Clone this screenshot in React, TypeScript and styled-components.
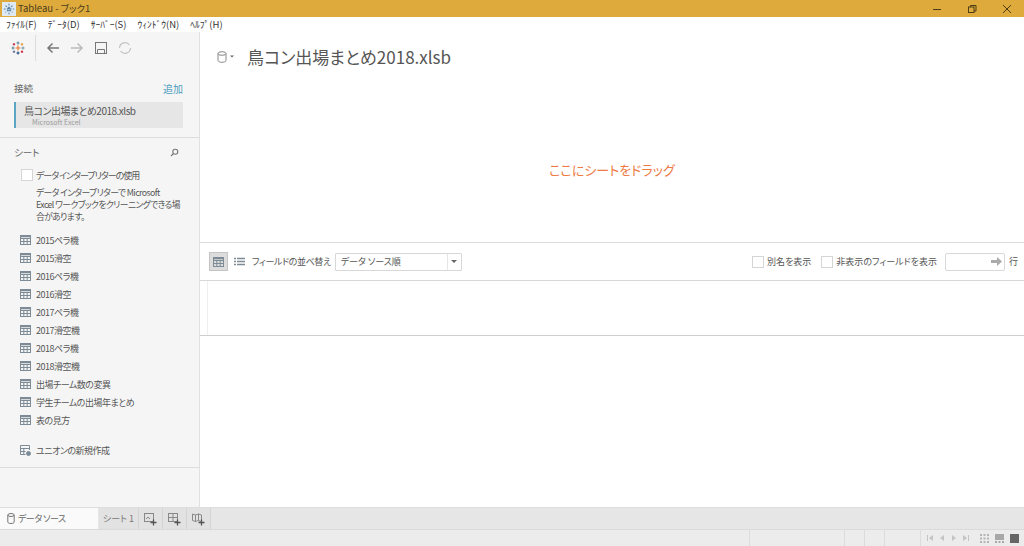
import React from "react";
import styled, { createGlobalStyle } from "styled-components";

const Global = createGlobalStyle`
  html, body { margin: 0; padding: 0; background: #fff; }
  body { font-family: "Noto Sans CJK JP", "Noto Sans", sans-serif; color: #555; overflow: hidden; font-feature-settings: "palt"; }
  * { box-sizing: border-box; }
`;
const Page = styled.div`width:1024px;height:546px;display:flex;flex-direction:column;overflow:hidden;`;
const TitleBar = styled.div`height:17px;background:#deaa3b;display:flex;align-items:center;flex:none;`;
const AppIcon = styled.div`width:14px;height:14px;margin-left:2px;background:#dfe9f1;display:flex;align-items:center;justify-content:center;`;
const TitleText = styled.span`font-size:9.5px;color:#4a3c1c;margin-left:2px;line-height:17px;`;
const WinButtons = styled.div`margin-left:auto;display:flex;align-items:center;`;
const WinBtn = styled.div`width:35px;height:17px;display:flex;align-items:center;justify-content:center;`;
const MenuBar = styled.div`height:15px;background:#fff;display:flex;align-items:center;padding-left:6px;gap:11px;flex:none;`;
const MenuItem = styled.span`font-size:9.5px;color:#333;line-height:15px;`;
const Body = styled.div`flex:1;display:flex;min-height:0;`;
const Sidebar = styled.aside`width:200px;flex:none;background:#f5f5f5;border-right:1px solid #e0e0e0;display:flex;flex-direction:column;`;
const SideTools = styled.div`height:32px;display:flex;align-items:center;padding-left:11px;flex:none;`;
const ToolSep = styled.div`width:1px;height:26px;background:#dcdcdc;margin:0 10px;`;
const ToolIcons = styled.div`display:flex;align-items:center;gap:10px;`;
const ConnSection = styled.section`padding:16px 16px 10px 14px;border-bottom:1px solid #dcdcdc;height:74px;flex:none;`;
const SectionHead = styled.div`display:flex;justify-content:space-between;align-items:center;height:16px;font-size:9.5px;color:#666;`;
const AddLink = styled.span`color:#4d9dc0;font-size:10px;`;
const ConnCard = styled.div`margin-top:6px;height:26px;background:#e6e6e6;border-left:2px solid #5ba5c4;padding-left:8px;display:flex;flex-direction:column;justify-content:center;`;
const ConnName = styled.div`font-size:10px;line-height:13px;color:#555;letter-spacing:-.5px;`;
const ConnType = styled.div`font-size:7px;line-height:10px;color:#999;padding-left:8px;`;
const SheetSection = styled.section`padding:6px 20px 0 14px;height:330px;border-bottom:1px solid #dcdcdc;flex:none;`;
const CheckRow = styled.label`display:flex;align-items:center;gap:3px;font-size:9px;letter-spacing:-1px;color:#555;margin-top:8px;margin-left:7px;height:14px;white-space:nowrap;`;
const Box = styled.span`width:12px;height:12px;background:#fff;border:1px solid #d5d5d5;display:inline-block;flex:none;`;
const Desc = styled.p`margin:5px 0 0 22px;font-size:8.800px;letter-spacing:-.6px;line-height:12px;color:#555;white-space:nowrap;`;
const SheetList = styled.div`margin-top:8px;display:flex;flex-direction:column;`;
const SheetRow = styled.div<{ $gap?: boolean }>`height:18px;display:flex;align-items:center;gap:5px;padding-left:6px;font-size:9px;letter-spacing:-.5px;color:#555;white-space:nowrap;margin-top:${(p) => (p.$gap ? "12px" : "0")};`;
const Main = styled.main`flex:1;display:flex;flex-direction:column;min-width:0;background:#fff;`;
const Header = styled.div`height:211px;display:flex;flex-direction:column;border-bottom:1px solid #dcdcdc;flex:none;`;
const TitleRow = styled.div`display:flex;align-items:center;height:49px;padding-left:17px;gap:12px;flex:none;`;
const BookTitle = styled.h1`margin:0;font-size:17px;font-weight:400;color:#555;`;
const DropZone = styled.div`flex:1;display:flex;align-items:center;justify-content:center;color:#ee7a45;font-size:13px;padding-top:16px;`;
const GridBar = styled.div`height:38px;border-bottom:1px solid #d8d8d8;display:flex;align-items:center;padding:0 6px 0 9px;flex:none;`;
const ViewBtn = styled.div<{ $on?: boolean }>`width:19px;height:19px;display:flex;align-items:center;justify-content:center;background:${(p) => (p.$on ? "#dcdcdc" : "transparent")};border:1px solid ${(p) => (p.$on ? "#c4c4c4" : "transparent")};margin-right:2px;`;
const BarLabel = styled.span<{ $lead?: boolean }>`font-size:9px;color:#555;white-space:nowrap;margin-left:${(p) => (p.$lead ? "1px" : "0")};letter-spacing:${(p) => (p.$lead ? "-.4px" : "0")};`;
const Select = styled.div`width:127px;height:18px;margin-left:4px;border:1px solid #d8d8d8;display:flex;align-items:center;font-size:9px;padding-left:5px;border-radius:1px;`;
const Caret = styled.div`margin-left:auto;width:14px;height:16px;border-left:1px solid #e6e6e6;display:flex;align-items:center;justify-content:center;&::after{content:"";border:3px solid transparent;border-top:3px solid #666;margin-top:3px;}`;
const Right = styled.div`margin-left:auto;display:flex;align-items:center;`;
const OptLabel = styled.label<{ $mr: number }>`display:flex;align-items:center;gap:3px;font-size:9px;color:#555;margin-right:${(p) => p.$mr}px;`;
const RowsInput = styled.div`width:60px;height:18px;border:1px solid #d8d8d8;border-radius:2px;display:flex;align-items:center;justify-content:flex-end;padding-right:2px;margin-right:4px;`;
const GridArea = styled.div`height:55px;border-bottom:1px solid #cfcfcf;flex:none;padding-left:7px;`;
const GridCol = styled.div`height:100%;border-left:1px solid #efefef;`;
const TabBar = styled.div`height:23px;background:#e6e6e6;border-top:1px solid #dedede;border-bottom:1px solid #dadada;display:flex;flex:none;`;
const DataTab = styled.div`width:98px;background:#fafafa;display:flex;align-items:center;gap:3px;padding-left:7px;font-size:9px;letter-spacing:-.5px;color:#666;`;
const SheetTab = styled.div`width:40px;margin-left:1px;display:flex;align-items:center;justify-content:center;font-size:9px;color:#777;background:#e2e2e2;border-right:1px solid #d4d4d4;`;
const IconTab = styled.div`width:24px;display:flex;align-items:center;justify-content:center;background:#e2e2e2;border-right:1px solid #d4d4d4;`;
const StatusBar = styled.div`height:16px;background:#ececec;display:flex;align-items:center;flex:none;padding-left:749px;padding-right:5px;`;
const StatusCell = styled.div<{ $w: number }>`width:${(p) => p.$w}px;height:16px;border-left:1px solid #dcdcdc;flex:none;`;
const Pager = styled.div`height:16px;border-left:1px solid #dcdcdc;padding-left:5px;display:flex;align-items:center;gap:4px;flex:none;`;
const PageGlyph = styled.svg`width:8px;height:8px;`;
const ViewGlyphs = styled.div`display:flex;align-items:center;gap:6px;margin-left:10px;`;

const Grid = () => (
  <svg width="11" height="10" viewBox="0 0 11 10" fill="none" stroke="#7d8b96">
    <rect x=".5" y=".5" width="10" height="9" />
    <path d="M.5 3.500h10M.5 6.500h10M3.800 3v6.500M7.200 3v6.500" />
    <path d="M.5 1.500h10" strokeWidth="1.500" />
  </svg>
);
const Arrow = ({ dir, c }: { dir: "l" | "r"; c: string }) => (
  <svg width="14" height="12" viewBox="0 0 14 12" fill="none" stroke={c} strokeWidth="1.500" style={dir === "r" ? { transform: "scaleX(-1)" } : undefined}>
    <path d="M13 6H2M6.500 1.500 2 6l4.500 4.500" />
  </svg>
);
const Cyl = () => (
  <svg width="8" height="11" viewBox="0 0 8 11" fill="none" stroke="#777">
    <ellipse cx="4" cy="2" rx="3.200" ry="1.500" />
    <path d="M.8 2v7c0 .9 1.400 1.500 3.200 1.500S7.200 9.900 7.200 9V2" />
  </svg>
);
const Plus = ({ kind }: { kind: "sheet" | "dash" | "story" }) => (
  <svg width="15" height="14" viewBox="0 0 15 14" fill="none" stroke="#888">
    {kind === "sheet" && <><rect x="1.500" y="1.500" width="9" height="8" /><path d="M3 7l2-2 2 2" /></>}
    {kind === "dash" && <><rect x="1.500" y="1.500" width="9" height="8" /><path d="M1.500 5.500h9M6 1.500v8" /></>}
    {kind === "story" && <path d="M1.500 2l3 1 3-1 3 1v6.500l-3-1-3 1-3-1zM4.500 3v6.500M7.500 2v6.500" />}
    <path d="M10.500 7.500v6M7.500 10.500h6" stroke="#555" strokeWidth="1.300" />
  </svg>
);
const Logo = () => (
  <svg width="14" height="14" viewBox="0 0 14 14" strokeWidth="1.100" fill="none">
    <path d="M7 4.500v5M4.500 7h5" stroke="#e8762b" />
    <path d="M7 .5v3M5.500 2h3" stroke="#5b879b" />
    <path d="M7 10.500v3M5.500 12h3" stroke="#1f447a" />
    <path d="M.5 7h3M2 5.500v3" stroke="#59879b" />
    <path d="M10.500 7h3M12 5.500v3" stroke="#7199a6" />
    <path d="M3 2v2.500M1.800 3.200h2.400" stroke="#c72035" />
    <path d="M11 2v2.500M9.800 3.200h2.400" stroke="#eb912b" />
    <path d="M3 9.500V12M1.800 10.800h2.400" stroke="#5c6692" />
    <path d="M11 9.500V12M9.800 10.800h2.400" stroke="#c72035" />
  </svg>
);
const AppLogo = () => (
  <svg width="12" height="12" viewBox="0 0 14 14" strokeWidth="1.300" fill="none" stroke="#4f7fa8">
    <path d="M7 1v12M1 7h12M3 3l8 8M11 3l-8 8" strokeDasharray="2 1.500" />
  </svg>
);

const sheets = ["2015ペラ機", "2015滑空", "2016ペラ機", "2016滑空", "2017ペラ機", "2017滑空機", "2018ペラ機", "2018滑空機", "出場チーム数の変異", "学生チームの出場年まとめ", "表の見方"];

export default function App() {
  return (
    <Page>
      <Global />
      <TitleBar>
        <AppIcon><AppLogo /></AppIcon>
        <TitleText>Tableau - ブック1</TitleText>
        <WinButtons>
          <WinBtn><svg width="10" height="10" stroke="#4d3c15" fill="none"><path d="M1 5.500h8" /></svg></WinBtn>
          <WinBtn><svg width="10" height="10" stroke="#4d3c15" fill="none"><rect x="1.500" y="3" width="5.500" height="5.500" /><path d="M3.500 3V1.500h5.500V7H7" /></svg></WinBtn>
          <WinBtn><svg width="10" height="10" stroke="#4d3c15" fill="none"><path d="M1 1l8 8M9 1l-8 8" /></svg></WinBtn>
        </WinButtons>
      </TitleBar>
      <MenuBar>
        {["ﾌｧｲﾙ(F)", "ﾃﾞｰﾀ(D)", "ｻｰﾊﾞｰ(S)", "ｳｨﾝﾄﾞｳ(N)", "ﾍﾙﾌﾟ(H)"].map((m) => <MenuItem key={m}>{m}</MenuItem>)}
      </MenuBar>
      <Body>
        <Sidebar>
          <SideTools>
            <Logo />
            <ToolSep />
            <ToolIcons>
              <Arrow dir="l" c="#777" />
              <Arrow dir="r" c="#bbb" />
              <svg width="14" height="14" viewBox="0 0 14 14" fill="none" stroke="#777"><rect x="1.500" y="1.500" width="11" height="11" /><path d="M3.500 12.500v-4h7v4" /></svg>
              <svg width="14" height="14" viewBox="0 0 14 14" fill="none" stroke="#c4c4c4" strokeWidth="1.200"><path d="M1.500 7a5.500 5.500 0 0 1 10-3M12.500 7a5.500 5.500 0 0 1-10 3" /></svg>
            </ToolIcons>
          </SideTools>
          <ConnSection>
            <SectionHead>接続<AddLink>追加</AddLink></SectionHead>
            <ConnCard>
              <ConnName>鳥コン出場まとめ2018.xlsb</ConnName>
              <ConnType>Microsoft Excel</ConnType>
            </ConnCard>
          </ConnSection>
          <SheetSection>
            <SectionHead>シート
              <svg width="9" height="9" viewBox="0 0 9 9" fill="none" stroke="#777" strokeWidth="1.100"><circle cx="5.300" cy="3.700" r="2.500" /><path d="M3.500 5.500L1 8" /></svg>
            </SectionHead>
            <CheckRow><Box />データ インタープリターの使用</CheckRow>
            <Desc>データ インタープリターで Microsoft<br />Excel ワークブックをクリーニングできる場<br />合があります。</Desc>
            <SheetList>
              {sheets.map((s) => <SheetRow key={s}><Grid />{s}</SheetRow>)}
              <SheetRow $gap>
                <svg width="11" height="11" viewBox="0 0 11 11" fill="none" stroke="#7d8b96"><path d="M5.500 9.500H.5V.5h9V5M.5 3.500h9M.5 6.500h5M3.800 3v6.500" /><circle cx="8.500" cy="8.500" r="2" fill="#7d8b96" /></svg>
                ユニオンの新規作成
              </SheetRow>
            </SheetList>
          </SheetSection>
        </Sidebar>
        <Main>
          <Header>
            <TitleRow>
              <svg width="18" height="12" viewBox="0 0 18 12" fill="none" stroke="#888"><ellipse cx="5" cy="2.500" rx="4" ry="1.800" /><path d="M1 2.500v7c0 1 1.800 1.800 4 1.800s4-.8 4-1.800v-7" /><path d="M13 4.500h4l-2 2z" fill="#666" stroke="none" /></svg>
              <BookTitle>鳥コン出場まとめ2018.xlsb</BookTitle>
            </TitleRow>
            <DropZone>ここにシートをドラッグ</DropZone>
          </Header>
          <GridBar>
            <ViewBtn $on><Grid /></ViewBtn>
            <ViewBtn><svg width="11" height="10" stroke="#7d8b96"><path d="M0 1.500h2M3 1.500h8M0 4.500h2M3 4.500h8M0 7.500h2M3 7.500h8" strokeWidth="1.500" /></svg></ViewBtn>
            <BarLabel $lead>フィールドの並べ替え</BarLabel>
            <Select>データ ソース順<Caret /></Select>
            <Right>
              <OptLabel $mr={10}><Box />別名を表示</OptLabel>
              <OptLabel $mr={8}><Box />非表示のフィールドを表示</OptLabel>
              <RowsInput><svg width="11" height="9" fill="#aaa"><path d="M0 3h6V0l5 4.500L6 9V6H0z" /></svg></RowsInput>
              <BarLabel>行</BarLabel>
            </Right>
          </GridBar>
          <GridArea><GridCol /></GridArea>
        </Main>
      </Body>
      <TabBar>
        <DataTab><Cyl />データ ソース</DataTab>
        <SheetTab>シート 1</SheetTab>
        <IconTab><Plus kind="sheet" /></IconTab>
        <IconTab><Plus kind="dash" /></IconTab>
        <IconTab><Plus kind="story" /></IconTab>
      </TabBar>
      <StatusBar>
        <StatusCell $w={95} />
        <StatusCell $w={20} />
        <StatusCell $w={20} />
        <StatusCell $w={36} />
        <Pager>
          <PageGlyph viewBox="0 0 8 8" fill="#c4c4c4"><path d="M1 1h1v6H1zM7 1v6L3 4z" /></PageGlyph>
          <PageGlyph viewBox="0 0 8 8" fill="#c4c4c4"><path d="M6 1v6L2 4z" /></PageGlyph>
          <PageGlyph viewBox="0 0 8 8" fill="#c4c4c4"><path d="M2 1v6l4-3z" /></PageGlyph>
          <PageGlyph viewBox="0 0 8 8" fill="#c4c4c4"><path d="M7 1H6v6h1zM1 1v6l4-3z" /></PageGlyph>
        </Pager>
        <ViewGlyphs>
          <svg width="9" height="9" fill="#b5b5b5"><path d="M0 0h2v2H0zM3.500 0h2v2h-2zM7 0h2v2H7zM0 3.500h2v2H0zM3.500 3.500h2v2h-2zM7 3.500h2v2H7zM0 7h2v2H0zM3.500 7h2v2h-2zM7 7h2v2H7z" /></svg>
          <svg width="9" height="9" fill="#a8a8a8"><path d="M0 0h9v6H0zM0 7h2v2H0zM3.500 7h2v2h-2zM7 7h2v2H7z" /></svg>
          <svg width="9" height="9" fill="#666"><path d="M0 0h9v9H0z" /></svg>
        </ViewGlyphs>
      </StatusBar>
    </Page>
  );
}
